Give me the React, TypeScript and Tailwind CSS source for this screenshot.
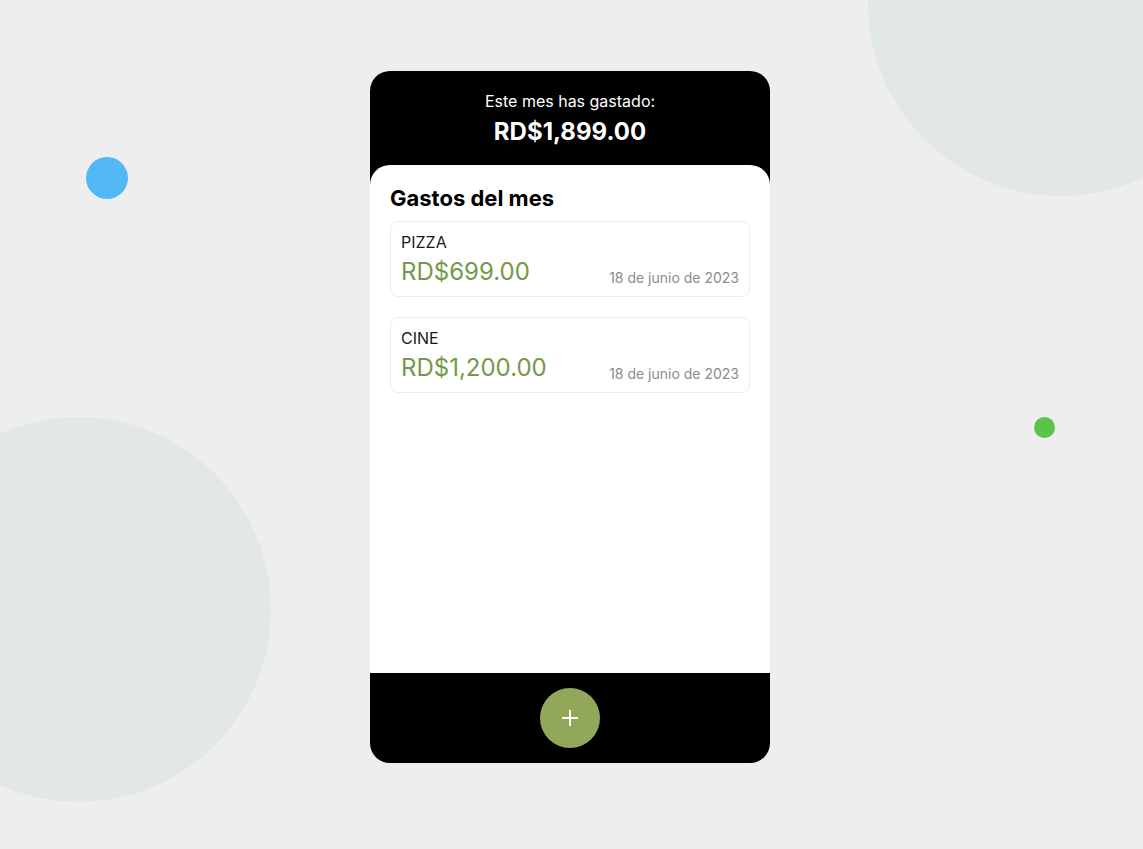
const gastos = [
  { nombre: 'PIZZA', monto: 'RD$699.00', fecha: '18 de junio de 2023' },
  { nombre: 'CINE', monto: 'RD$1,200.00', fecha: '18 de junio de 2023' },
]

const GastoCard = ({ gasto }: { gasto: (typeof gastos)[number] }) => {
  return (
    <div className="rounded-lg border border-[#ececec] px-[10px] pt-[10px] pb-[10px]">
      <p className="text-base leading-5 text-[#1a1a1a]">{gasto.nombre}</p>
      <div className="mt-[6px] flex items-end justify-between">
        <span className="text-2xl leading-7 text-[#76984a]">{gasto.monto}</span>
        <span className="-mb-[2px] text-sm leading-5 text-[#8c8c8c]">{gasto.fecha}</span>
      </div>
    </div>
  )
}

export default function App() {
  return (
    <div className="relative min-h-screen overflow-hidden bg-[#eeeeee] font-['Inter',sans-serif]">
      {/* decoracion */}
      <div className="absolute left-[-114px] top-[417px] h-[385px] w-[385px] rounded-full bg-[#e2e8e8]" />
      <div className="absolute left-[868px] top-[-189px] h-[385px] w-[385px] rounded-full bg-[#e2e8e8]" />
      <div className="absolute left-[86px] top-[157px] h-[42px] w-[42px] rounded-full bg-[#55b8f6]" />
      <div className="absolute left-[1034px] top-[417px] h-[21px] w-[21px] rounded-full bg-[#5cc24a]" />

      <div className="relative ml-[370px] mt-[71px] flex h-[692px] w-[400px] flex-col overflow-hidden rounded-[20px] bg-black">
        <header className="flex h-[94px] flex-col items-center pt-[20px] text-white">
          <p className="text-base leading-5">Este mes has gastado:</p>
          <p className="mt-[5px] text-2xl font-bold leading-8">RD$1,899.00</p>
        </header>

        <main className="flex-1 rounded-t-[20px] bg-white px-5 pt-[19px]">
          <h2 className="text-[22px] font-bold leading-7 text-black">Gastos del mes</h2>
          <div className="mt-[9px] flex flex-col gap-5">
            {gastos.map((g) => (
              <GastoCard key={g.nombre} gasto={g} />
            ))}
          </div>
        </main>

        <footer className="flex h-[90px] items-center justify-center">
          <button className="flex h-[60px] w-[60px] items-center justify-center rounded-full bg-[#93a75b] text-white">
            <svg width="18" height="18" viewBox="0 0 18 18" fill="none" stroke="currentColor" strokeWidth="2">
              <path d="M9 1v16M1 9h16" />
            </svg>
          </button>
        </footer>
      </div>
    </div>
  )
}
